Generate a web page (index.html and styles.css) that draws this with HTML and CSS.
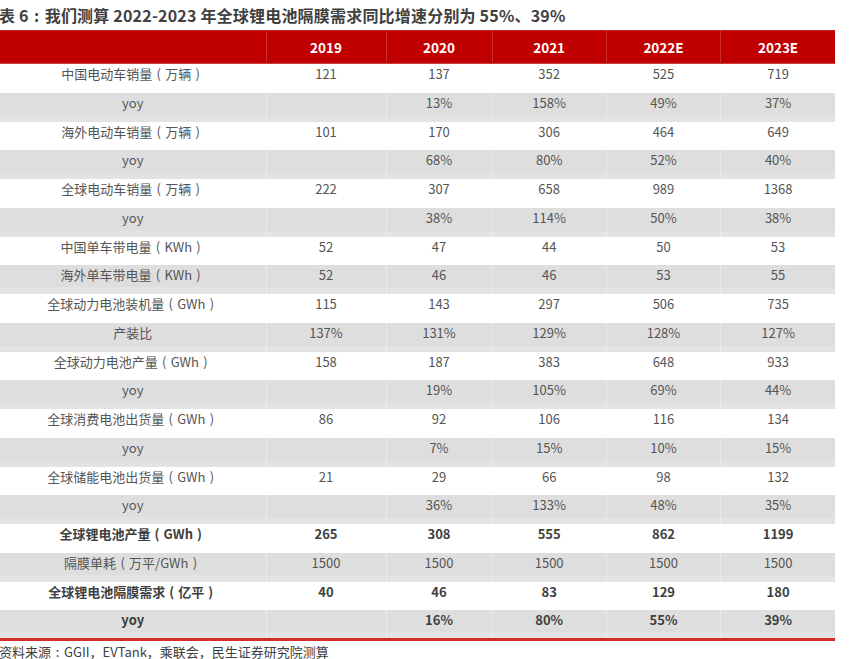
FILE: index.html
```html
<!DOCTYPE html>
<html lang="zh">
<head>
<meta charset="utf-8">
<title>表 6</title>
<link rel="stylesheet" href="styles.css">
</head>
<body>
<div class="page">
  <h1 class="title">表 6<span class="p">:</span>我们测算 2022-2023 年全球锂电池隔膜需求同比增速分别为 55%、39%</h1>
  <table class="data">
    <colgroup>
      <col class="c-label"><col class="c-2019"><col class="c-2020"><col class="c-y"><col class="c-y"><col class="c-y">
    </colgroup>
    <thead>
      <tr><th></th><th>2019</th><th>2020</th><th>2021</th><th>2022E</th><th>2023E</th></tr>
    </thead>
    <tbody>
      <tr><td>中国电动车销量<span class="p">(</span>万辆<span class="p">)</span></td><td>121</td><td>137</td><td>352</td><td>525</td><td>719</td></tr>
      <tr class="alt"><td>yoy</td><td></td><td>13%</td><td>158%</td><td>49%</td><td>37%</td></tr>
      <tr><td>海外电动车销量<span class="p">(</span>万辆<span class="p">)</span></td><td>101</td><td>170</td><td>306</td><td>464</td><td>649</td></tr>
      <tr class="alt"><td>yoy</td><td></td><td>68%</td><td>80%</td><td>52%</td><td>40%</td></tr>
      <tr><td>全球电动车销量<span class="p">(</span>万辆<span class="p">)</span></td><td>222</td><td>307</td><td>658</td><td>989</td><td>1368</td></tr>
      <tr class="alt"><td>yoy</td><td></td><td>38%</td><td>114%</td><td>50%</td><td>38%</td></tr>
      <tr><td>中国单车带电量<span class="p">(</span>KWh<span class="p">)</span></td><td>52</td><td>47</td><td>44</td><td>50</td><td>53</td></tr>
      <tr class="alt"><td>海外单车带电量<span class="p">(</span>KWh<span class="p">)</span></td><td>52</td><td>46</td><td>46</td><td>53</td><td>55</td></tr>
      <tr><td>全球动力电池装机量<span class="p">(</span>GWh<span class="p">)</span></td><td>115</td><td>143</td><td>297</td><td>506</td><td>735</td></tr>
      <tr class="alt"><td>产装比</td><td>137%</td><td>131%</td><td>129%</td><td>128%</td><td>127%</td></tr>
      <tr><td>全球动力电池产量<span class="p">(</span>GWh<span class="p">)</span></td><td>158</td><td>187</td><td>383</td><td>648</td><td>933</td></tr>
      <tr class="alt"><td>yoy</td><td></td><td>19%</td><td>105%</td><td>69%</td><td>44%</td></tr>
      <tr><td>全球消费电池出货量<span class="p">(</span>GWh<span class="p">)</span></td><td>86</td><td>92</td><td>106</td><td>116</td><td>134</td></tr>
      <tr class="alt"><td>yoy</td><td></td><td>7%</td><td>15%</td><td>10%</td><td>15%</td></tr>
      <tr><td>全球储能电池出货量<span class="p">(</span>GWh<span class="p">)</span></td><td>21</td><td>29</td><td>66</td><td>98</td><td>132</td></tr>
      <tr class="alt"><td>yoy</td><td></td><td>36%</td><td>133%</td><td>48%</td><td>35%</td></tr>
      <tr class="bold"><td>全球锂电池产量<span class="p">(</span>GWh<span class="p">)</span></td><td>265</td><td>308</td><td>555</td><td>862</td><td>1199</td></tr>
      <tr class="alt"><td>隔膜单耗<span class="p">(</span>万平/GWh<span class="p">)</span></td><td>1500</td><td>1500</td><td>1500</td><td>1500</td><td>1500</td></tr>
      <tr class="bold"><td>全球锂电池隔膜需求<span class="p">(</span>亿平<span class="p">)</span></td><td>40</td><td>46</td><td>83</td><td>129</td><td>180</td></tr>
      <tr class="alt bold"><td>yoy</td><td></td><td>16%</td><td>80%</td><td>55%</td><td>39%</td></tr>
    </tbody>
  </table>
  <p class="source">资料来源<span class="p">:</span>GGII，EVTank，乘联会，民生证券研究院测算</p>
</div>
</body>
</html>
```

FILE: styles.css
```css
html, body {
  margin: 0;
  padding: 0;
  background: #ffffff;
}

body {
  font-family: "Noto Sans CJK SC", "Noto Sans", sans-serif;
  color: #555555;
}

.page {
  width: 854px;
}

.title {
  margin: 0;
  height: 30px;
  line-height: 30px;
  font-size: 16px;
  font-weight: 700;
  color: #404040;
  text-indent: -1px;
  white-space: nowrap;
  letter-spacing: 0.2px;
}

.data {
  width: 835px;
  table-layout: fixed;
  border-collapse: collapse;
  border-spacing: 0;
  border-bottom: 3px solid #d42b2b;
}

.c-label { width: 266px; }
.c-2019 { width: 120px; }
.c-2020 { width: 106px; }
.c-y { width: 114.33px; }

.data th {
  height: 33px;
  padding: 0 0 1px;
  background: #c00000;
  color: #ffffff;
  font-size: 13.5px;
  font-weight: 700;
  text-align: center;
  border-left: 1px solid rgba(255, 255, 255, 0.18);
  box-shadow: inset 0 -5px 0 -4px rgba(255, 255, 255, 0.25), inset 0 6px 0 -5px rgba(255, 255, 255, 0.12);
}

.data th:first-child {
  border-left: none;
}

.data td {
  height: 28.75px;
  padding: 2px 0 0;
  box-sizing: border-box;
  vertical-align: top;
  font-size: 13px;
  text-align: center;
  white-space: nowrap;
  line-height: 16px;
  border-left: 1px solid rgba(255, 255, 255, 0.35);
}

.data td:first-child {
  border-left: none;
}

.p {
  display: inline-block;
  width: 1em;
  text-align: center;
  text-indent: 0;
}

.data tr.alt td {
  background: linear-gradient(#dedede 0, #dedede 22.5px, #e3e3e3 22.5px);
}

.data tr.bold td {
  font-weight: 700;
  color: #404040;
}

.source {
  margin: 3px 0 0;
  font-size: 13px;
  line-height: 16px;
  color: #404040;
  text-indent: -1px;
  white-space: nowrap;
}
```
